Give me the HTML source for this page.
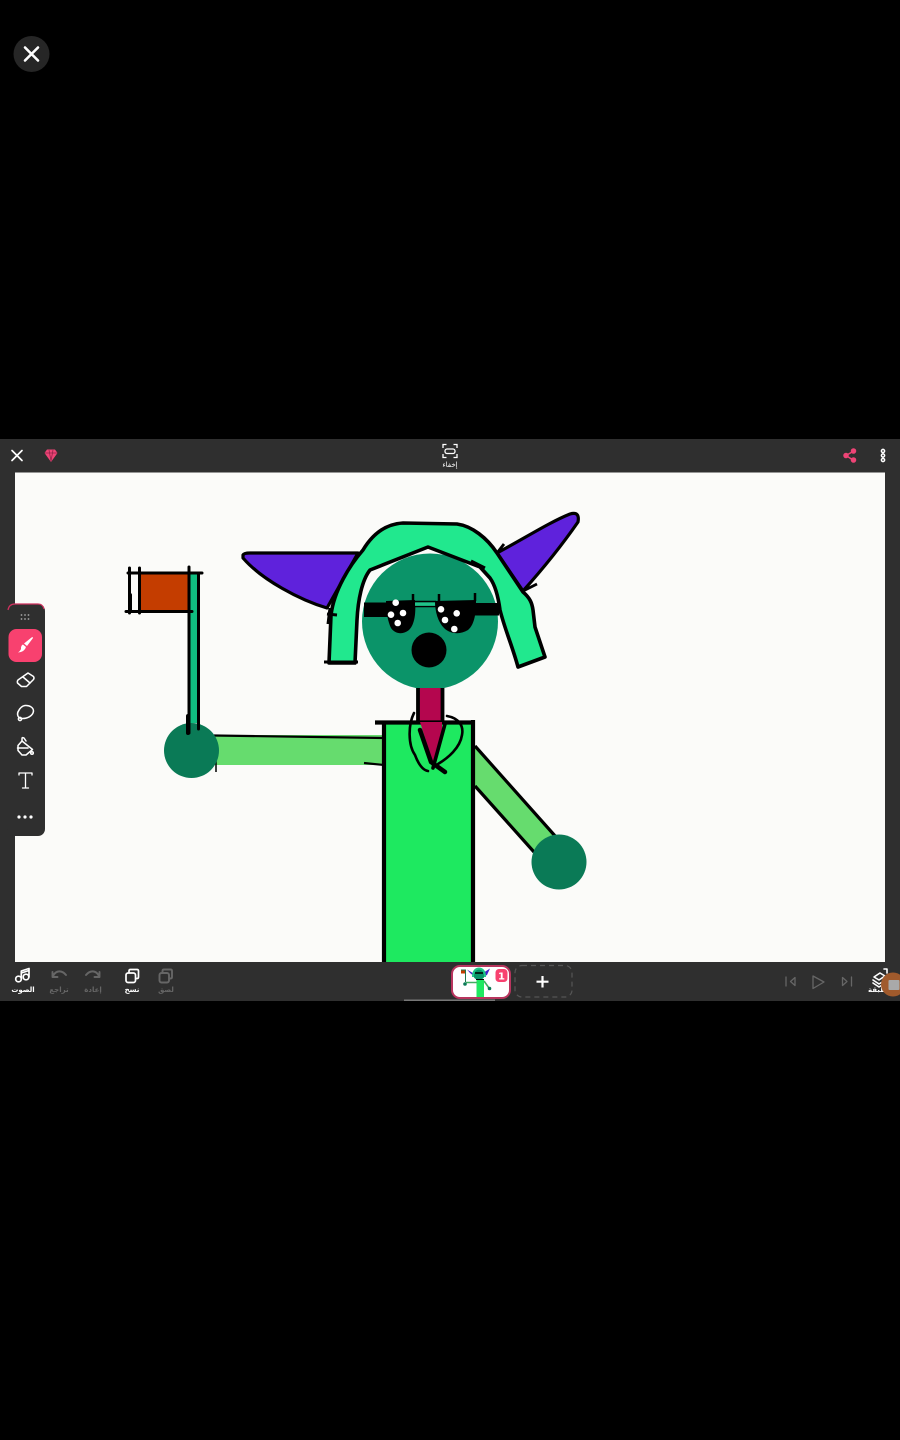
<!DOCTYPE html>
<html><head><meta charset="utf-8">
<style>
html,body{margin:0;padding:0;background:#000;width:900px;height:1440px;overflow:hidden}
svg{display:block;position:absolute;left:0;top:0;filter:blur(.35px)}
text{font-family:"DejaVu Sans","Liberation Sans",sans-serif}
</style></head>
<body>
<svg width="900" height="1440" viewBox="0 0 900 1440" xmlns="http://www.w3.org/2000/svg">
<rect width="900" height="1440" fill="#000"/>
<!-- close button -->
<circle cx="31.500" cy="54" r="18" fill="#262626"/>
<path d="M25 47.500L38 60.500M38 47.500L25 60.500" stroke="#fff" stroke-width="2.600" stroke-linecap="round"/>
<!-- app frame -->
<rect x="0" y="439" width="900" height="562" fill="#2f2f2f"/>
<rect x="15" y="472.500" width="870" height="489.500" fill="#fbfbf9"/>
<!-- top bar -->
<path d="M12 450.500L22 460.500M22 450.500L12 460.500" stroke="#fff" stroke-width="1.700" stroke-linecap="round"/>
<path d="M47 449.500h8l2.500 3.500-6.500 9-6.500-9z" fill="#ee4476"/>
<path d="M44.500 453h13M49 450l2 11 2-11" stroke="#8e2247" stroke-width=".7" fill="none"/>
<g stroke="#fff" stroke-width="1.300" fill="none">
<path d="M443 448v-3.500h3.500M453.500 444.500h3.500v3.500M443 454v3.500h3.500M453.500 457.500h3.500v-3.500"/>
<rect x="445" y="449" width="10" height="4.500" rx="2"/>
</g>
<text x="450" y="467" font-size="7" fill="#fff" text-anchor="middle">إخفاء</text>
<g stroke="#ee4476" stroke-width="1.500" fill="#ee4476">
<path d="M853 451.500L846 455.500L853 460" fill="none"/>
<circle cx="853.500" cy="451" r="2"/><circle cx="846" cy="455.500" r="2"/><circle cx="853.500" cy="460" r="2"/>
</g>
<g fill="none" stroke="#fff" stroke-width="1.500">
<circle cx="883" cy="451" r="1.600"/><circle cx="883" cy="455.500" r="1.600"/><circle cx="883" cy="460" r="1.600"/>
</g>

<!-- drawing: arms -->
<rect x="214" y="735" width="170" height="30" fill="#66dc6e"/>
<path d="M214 735.500L384 738M364 763l20 2" stroke="#000" stroke-width="2.200" fill="none"/>
<path d="M216 745v27" stroke="#000" stroke-width="1.500"/>
<path d="M474 746L557 838L534 853L474 786z" fill="#66dc6e"/>
<path d="M475 746L556 837M475 786L534 852" stroke="#000" stroke-width="3.200" fill="none"/>
<!-- hands -->
<circle cx="191.500" cy="750.500" r="27.500" fill="#0a7a56"/>
<circle cx="559" cy="862" r="27.500" fill="#0a7a56"/>
<!-- flag -->
<rect x="139" y="573" width="50" height="39" fill="#c43d00"/>
<rect x="189" y="573" width="10" height="150" fill="#10bd80"/>
<g stroke="#000" fill="none" stroke-linecap="round">
<path d="M189 567V733M198.500 573V729" stroke-width="3"/>
<path d="M128 573H202" stroke-width="3"/>
<path d="M126 611.500H192" stroke-width="3"/>
<path d="M129.500 568V613M139.500 568V613" stroke-width="3"/>
<path d="M130 595V610" stroke-width="4"/>
<path d="M188 716V733" stroke-width="4"/>
</g>
<!-- ears -->
<path d="M243 555Q244 553 250 553L358 553L327 608C300 600 262 580 243 558z" fill="#5f22dc" stroke="#000" stroke-width="3.200" stroke-linejoin="round"/>
<path d="M497 553C525 538 550 522 570 514Q580 511 578 522C560 548 540 572 523 591z" fill="#5f22dc" stroke="#000" stroke-width="3.200" stroke-linejoin="round"/>
<path d="M523 591l14-7M497 553l7-9" stroke="#000" stroke-width="2.800"/>
<!-- face -->
<circle cx="430" cy="621.500" r="68" fill="#0b9469"/>
<!-- neck -->
<rect x="418" y="688" width="24" height="36" fill="#b4064e"/>
<path d="M418 688V724M442.500 688V724" stroke="#000" stroke-width="3.800"/>
<!-- body -->
<rect x="384" y="722" width="89" height="240" fill="#1ee960"/>
<path d="M375 722.500H475M384 722V962M473 720V962" stroke="#000" stroke-width="4.200" fill="none" stroke-linecap="butt"/>
<path d="M420 722L433 763L442 735L442 722Z" fill="#b4064e"/>
<g stroke="#000" fill="none" stroke-linecap="round">
<path d="M414 713C408 725 408 745 415 755C418 763 422 770 428 771" stroke-width="2.600"/>
<path d="M447 716C458 718 464 725 462 735C460 748 448 758 438 764" stroke-width="2.600"/>
<path d="M420 730L431 762L445 772" stroke-width="4.500"/>
<path d="M445 724L433 768" stroke-width="3.600"/>
</g>
<!-- hair -->
<path d="M329 663L331 615C334 590 350 565 363 550C372 535 385 524 403 523L457 524C472 526 487 538 497 553L523 592C530 598 532 603 533 610L535 627L545 657L518 667C512 645 505 630 500 610C498 595 495 585 490 578L480 567L428 547L370 570C362 580 358 600 357 620L355 663Z" fill="#21e88e" stroke="#000" stroke-width="3.600" stroke-linejoin="round"/>
<path d="M324 662H358M330 608l-2 16M327 614l10 1M471 561l14 7" stroke="#000" stroke-width="3"/>
<!-- glasses -->
<rect x="364" y="602.500" width="24" height="14.500" fill="#000"/>
<rect x="473" y="603" width="26" height="12.500" fill="#000"/>
<path d="M386 601L415 600C416 612 415 624 409 630C403 635 395 634 391 628C388 622 386 612 386 601z" fill="#000"/>
<path d="M435 601L476 600C476 612 475 624 468 630C460 635 450 634 444 628C438 622 435 612 435 601z" fill="#000"/>
<path d="M414 601.500H436M414 606.500H436" stroke="#000" stroke-width="1.600"/>
<rect x="415" y="602.500" width="20" height="3.300" fill="#21c48a"/>
<path d="M413 594v8M439 594v8M475 593v8" stroke="#000" stroke-width="2.500"/>
<g fill="#fff">
<circle cx="395.700" cy="602.700" r="3.300"/><circle cx="403" cy="613" r="3.300"/><circle cx="391" cy="614.700" r="3.300"/><circle cx="397.700" cy="623" r="3.300"/>
<circle cx="441" cy="609.300" r="3.300"/><circle cx="456.700" cy="613.300" r="3.300"/><circle cx="445" cy="620" r="3.300"/><circle cx="454.300" cy="629" r="3.300"/>
</g>
<circle cx="429" cy="650" r="17.500" fill="#000"/>

<!-- side toolbar -->
<rect x="7" y="604" width="38" height="232" rx="7" fill="#2f2f2f"/>
<path d="M8 610Q9 604 15 604H38Q43 604 44 609" stroke="#d0315f" stroke-width="1.200" fill="none"/>
<g fill="#a5a5a5"><circle cx="21.500" cy="615" r=".9"/><circle cx="25" cy="615" r=".9"/><circle cx="28.500" cy="615" r=".9"/><circle cx="21.500" cy="619" r=".9"/><circle cx="25" cy="619" r=".9"/><circle cx="28.500" cy="619" r=".9"/></g>
<rect x="8.500" y="629" width="33.500" height="33" rx="8" fill="#f8416f"/>
<path d="M33 638L27 646L24 643.500L31.500 637.500Q33 636.500 33 638zM23 644.500L26 647Q24.500 652 18 652.500Q21.500 650 21 647.500Q21.500 645 23 644.500z" fill="#fff"/>
<g fill="none" stroke="#fff" stroke-width="1.500" stroke-linejoin="round" stroke-linecap="round">
<path d="M28 673L33.500 676.500Q34.500 678 33.500 679.500L26.500 686.500H21.500L17.500 683Q17 681 18 680z"/>
<path d="M23 677L30 683"/>
<path d="M25 705.500C30 705 33.500 708 33.500 711C33 716 27 719 21 718.500C17 717.500 17 713 18.500 711C20 708 22 706 25 705.500z"/>
<circle cx="20" cy="719" r="1.600"/>
<path d="M22 741L32.500 749.500L26 755H22L18 750.500V745.500z"/>
<path d="M22 741V738.500Q22 737 24 738L26 741M17.500 748H28"/>
<circle cx="32" cy="753" r="1.300"/>
<path d="M19 775V773H32V775M25.500 773V788M22.500 788H28.500" stroke-width="1.300"/>
</g>
<g fill="#fff"><circle cx="19" cy="817" r="1.600"/><circle cx="25" cy="817" r="1.600"/><circle cx="31" cy="817" r="1.600"/></g>

<!-- bottom bar -->
<g fill="none" stroke="#fff" stroke-width="1.700" stroke-linecap="round" stroke-linejoin="round">
<circle cx="18.500" cy="979" r="2.800"/><circle cx="26" cy="977" r="2.800"/>
<path d="M21.300 979V971L29 968.500V977M21.300 973L29 970.500"/>
<rect x="126" y="973" width="9.500" height="9.500" rx="2"/>
<path d="M129 972.500V971Q129 969.500 130.500 969.500H137Q138.500 969.500 138.500 971V977Q138.500 978.500 137 978.500H136"/>
</g>
<g fill="none" stroke="#666" stroke-width="1.900" stroke-linecap="round" stroke-linejoin="round">
<path d="M66 975C62 970 56 970 53 976M52.500 972V977H57.500"/>
<path d="M86 975C90 970 96 970 99 976M99.500 972V977H94.500"/>
<rect x="159.500" y="973" width="9.500" height="9.500" rx="2"/>
<path d="M162.500 972.500V971Q162.500 969.500 164 969.500H170.500Q172 969.500 172 971V977Q172 978.500 170.500 978.500H169.500"/>
<path d="M786 977V986M795 977.500L790.500 981.500L795 985.500z" stroke-width="1.300"/>
<path d="M813 976L824 982L813 988.500z" stroke-width="1.300"/>
<path d="M851.500 977V986M842.500 977.500L847 981.500L842.500 985.500z" stroke-width="1.300"/>
</g>
<g font-size="7" text-anchor="middle" font-weight="bold">
<text x="23" y="992" fill="#fff">الصوت</text>
<text x="59" y="992" fill="#666">تراجع</text>
<text x="93" y="992" fill="#666">إعادة</text>
<text x="132" y="992" fill="#fff">نسخ</text>
<text x="166" y="992" fill="#666">لصق</text>
<text x="880" y="992" fill="#fff">الطبقة</text>
</g>
<g fill="none" stroke="#fff" stroke-width="1.600" stroke-linejoin="round" stroke-linecap="round">
<path d="M874 977L880 973L885 976L879 980z"/>
<path d="M873 980L879 984L884 981M873 983L879 987L884 984"/>
<path d="M884 969H887V973"/>
</g>
<circle cx="893" cy="984.500" r="12" fill="#a05a2c"/>
<rect x="888.500" y="980" width="11" height="10" rx="1" fill="#a9a9a9"/>
<!-- frame thumb -->
<rect x="452" y="966" width="58" height="32" rx="8" fill="#fff" stroke="#b8355e" stroke-width="2"/>
<path d="M476 975L467 969.500L470 973L475 977zM483 973L490 968.500L487 975L483 977z" fill="#4a20c8"/>
<circle cx="479" cy="974" r="6" fill="#0b9469"/>
<path d="M473 977Q473 969 479 968.500Q485 969 485 977" fill="none" stroke="#21c88a" stroke-width="2"/>
<path d="M475 973h8" stroke="#000" stroke-width="1.500"/>
<rect x="476.500" y="980" width="7.500" height="17" fill="#1ee960"/>
<path d="M476 979.500H484" stroke="#000" stroke-width="1"/>
<rect x="461" y="970" width="4.500" height="3.500" fill="#c43d00"/>
<path d="M465.500 970V982M461 970H466" stroke="#1f7a50" stroke-width="1"/>
<path d="M466 982.500H477M484 981L489 988" stroke="#3fb060" stroke-width="1.600"/>
<circle cx="465" cy="984" r="1.800" fill="#0a7a56"/><circle cx="489.500" cy="988.500" r="1.800" fill="#0a7a56"/>
<rect x="495.500" y="969" width="12" height="13" rx="3.500" fill="#f8416f"/>
<text x="501.500" y="979.500" font-size="10" font-weight="bold" fill="#fff" text-anchor="middle">1</text>
<rect x="515" y="965.500" width="57" height="31.500" rx="7" fill="none" stroke="#555" stroke-width="1.200" stroke-dasharray="5 4"/>
<path d="M542.500 976V987.500M536.500 981.700H548.500" stroke="#fff" stroke-width="2.200"/>
<rect x="404" y="999.500" width="91" height="1.500" fill="#777"/>
</svg>
</body></html>
